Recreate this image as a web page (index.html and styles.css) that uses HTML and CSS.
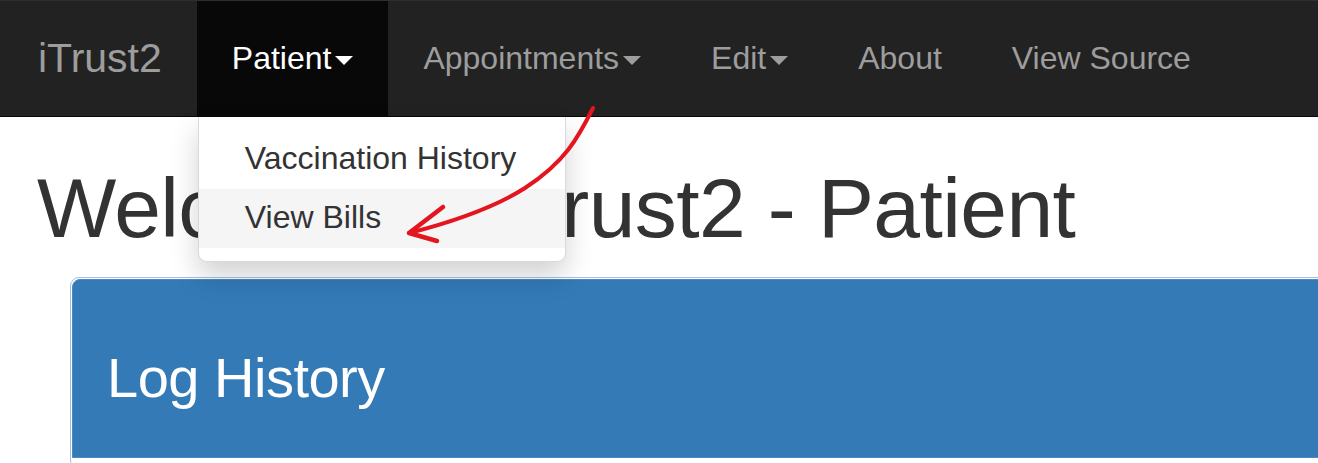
FILE: index.html
```html
<!DOCTYPE html>
<html>
<head>
<meta charset="utf-8">
<link rel="stylesheet" href="styles.css">
</head>
<body>
<nav class="navbar">
  <a class="brand">iTrust2</a>
  <ul class="nav">
    <li class="nav-item active">
      <a class="nav-link">Patient<span class="caret"></span></a>
      <ul class="dropdown">
        <li class="dropdown-item">Vaccination History</li>
        <li class="dropdown-item hover">View Bills</li>
      </ul>
    </li>
    <li class="nav-item"><a class="nav-link">Appointments<span class="caret"></span></a></li>
    <li class="nav-item"><a class="nav-link">Edit<span class="caret"></span></a></li>
    <li class="nav-item"><a class="nav-link">About</a></li>
    <li class="nav-item"><a class="nav-link">View Source</a></li>
  </ul>
</nav>
<main class="container">
  <h1 class="title">Welcome to iTrust2 - Patient</h1>
  <section class="panel">
    <div class="panel-heading">
      <h3 class="panel-title">Log History</h3>
    </div>
    <div class="panel-body"></div>
  </section>
</main>
<svg class="annotation" width="1318" height="463" viewBox="0 0 1318 463">
  <path d="M593 108 C 578 138, 565 162, 525 188 C 495 207, 452 222, 409 233" fill="none" stroke="#e3161f" stroke-width="4" stroke-linecap="round"/>
  <path d="M443 207 L409 233 L437 241" fill="none" stroke="#e3161f" stroke-width="4.5" stroke-linecap="round" stroke-linejoin="round"/>
</svg>
</body>
</html>
```
FILE: styles.css
```css
html, body {
  margin: 0;
  padding: 0;
  background: #fff;
  overflow: hidden;
  font-family: "Liberation Sans", Arial, sans-serif;
}
body {
  width: 1318px;
  height: 463px;
  position: relative;
}
.navbar {
  display: flex;
  align-items: stretch;
  height: 115px;
  background: #222;
  border-top: 1px solid #2e2e2e;
  border-bottom: 1px solid #080808;
  position: relative;
  z-index: 2;
}
.brand {
  display: flex;
  align-items: center;
  padding: 0 35px 0 38px;
  font-size: 41px;
  color: #9d9d9d;
}
.nav {
  display: flex;
  list-style: none;
  margin: 0;
  padding: 0;
}
.nav-item {
  position: relative;
  display: flex;
}
.nav-link {
  display: flex;
  align-items: center;
  padding: 0 35px;
  font-size: 32px;
  color: #9d9d9d;
}
.nav-item.active .nav-link {
  background: #080808;
  color: #fff;
}
.caret {
  display: inline-block;
  width: 0;
  height: 0;
  margin-left: 4px;
  margin-top: 4px;
  border-top: 9px solid currentColor;
  border-left: 9px solid transparent;
  border-right: 9px solid transparent;
}
.dropdown {
  position: absolute;
  left: 1px;
  top: 116px;
  width: 366px;
  margin: 0;
  padding: 13px 0;
  list-style: none;
  background: #fff;
  border: 1px solid rgba(0,0,0,.15);
  border-top: 0;
  border-radius: 0 0 9px 9px;
  box-shadow: 0 14px 28px rgba(0,0,0,.18);
}
.dropdown-item {
  padding: 6px 46px 8px;
  font-size: 32px;
  line-height: 45px;
  color: #333;
}
.dropdown-item.hover {
  background: #f5f5f5;
}
.container {
  padding: 0 0 0 37px;
}
.title {
  margin: 45px 0 23px;
  font-size: 84px;
  font-weight: 400;
  line-height: 1.1;
  letter-spacing: -0.6px;
  color: #333;
}
.panel {
  margin-left: 33px;
  width: 1300px;
  border: 1px solid #a3c2e3;
  border-radius: 9px;
  padding: 1px;
  background: #fff;
}
.panel-heading {
  background: #337ab7;
  border: 1px solid #4a89c2;
  border-radius: 8px 8px 0 0;
  padding: 23px 34px;
}
.panel-title {
  margin: 44px 0 25px;
  font-size: 56px;
  font-weight: 400;
  line-height: 1.1;
  letter-spacing: -0.5px;
  color: #fff;
}
.panel-body {
  height: 10px;
}
.annotation {
  position: absolute;
  left: 0;
  top: 0;
  z-index: 5;
  pointer-events: none;
}
```
